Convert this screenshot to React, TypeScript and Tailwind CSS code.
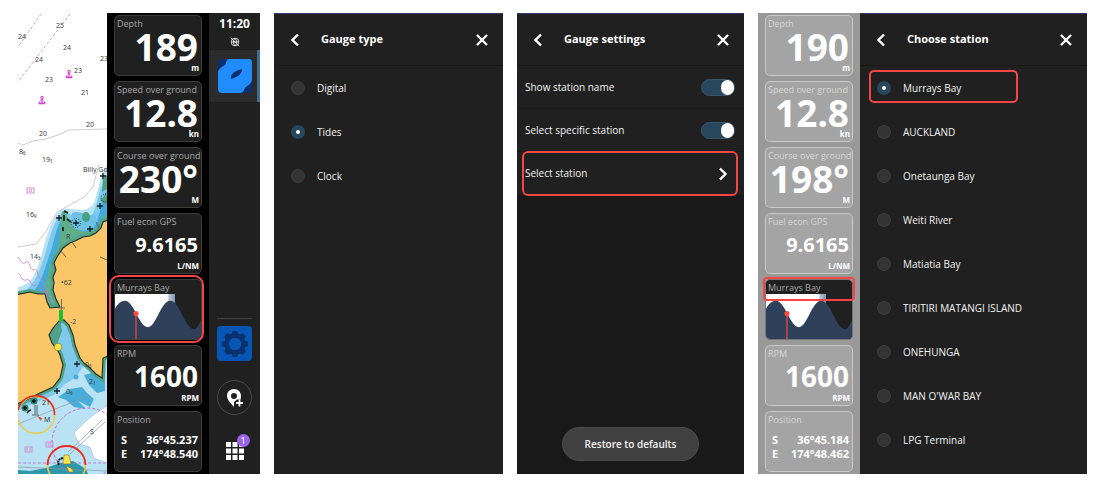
import { useState } from 'react';
import type { ReactNode } from 'react';
import clsx from 'clsx';

type Reading = {
  label: string;
  value: string;
  unit?: string;
  size?: 'lg' | 'md' | 'sm';
};

const stations = [
  'Murrays Bay',
  'AUCKLAND',
  'Onetaunga Bay',
  'Weiti River',
  'Matiatia Bay',
  'TIRITIRI MATANGI ISLAND',
  'ONEHUNGA',
  "MAN O'WAR BAY",
  'LPG Terminal',
];

function ChevronIcon({ right = false }: { right?: boolean }) {
  return (
    <svg width="14" height="16" viewBox="0 0 14 16" fill="none" stroke="currentColor" strokeWidth="2.4" aria-hidden="true">
      {right ? <path d="M4 2.5 9.5 8 4 13.5" /> : <path d="M10 2.5 4.5 8l5.500 5.500" />}
    </svg>
  );
}

function CloseIcon() {
  return (
    <svg width="14" height="14" viewBox="0 0 14 14" fill="none" stroke="currentColor" strokeWidth="2.3" aria-hidden="true">
      <path d="M2 2l10 10M12 2 2 12" />
    </svg>
  );
}

function Tile({ dimmed, label, children }: { dimmed?: boolean; label: string; children: ReactNode }) {
  return (
    <section
      className={clsx(
        'relative flex h-[61px] flex-col rounded-[5px] border text-white',
        dimmed ? 'border-[#c9c9c9] bg-[#a4a4a4]' : 'border-[#3c3c3c] bg-[#202020]',
      )}
    >
      <h3 className={clsx("whitespace-nowrap pl-0.5 pt-0.5 font-['Open_Sans'] text-[9px] leading-[12px]", dimmed ? 'text-[#d6d6d6]' : 'text-[#a8a8a8]')}>{label}</h3>
      {children}
    </section>
  );
}

function ValueTile({ reading, dimmed }: { reading: Reading; dimmed?: boolean }) {
  const { label, value, unit, size = 'lg' } = reading;
  return (
    <Tile label={label} dimmed={dimmed}>
      <p
        className={clsx(
          'pr-[3px] text-right font-bold leading-[33px]',
          size === 'lg' && 'text-[37px]',
          size === 'md' && 'text-[28px]',
          size === 'sm' && 'text-[20px]',
        )}
      >
        {value}
      </p>
      <p className="pr-0.5 text-right text-[8px] font-bold leading-[10px]">{unit}</p>
    </Tile>
  );
}

function TideGraph() {
  return (
    <svg className="mt-auto block h-[45px] w-full rounded-b-[4px]" viewBox="0 0 86 46" preserveAspectRatio="none" aria-label="Tide graph">
      <defs>
        <linearGradient id="dusk" x1="0" x2="1">
          <stop offset="0" stopColor="#fff" />
          <stop offset="0.87" stopColor="#fff" />
          <stop offset="0.9" stopColor="#b9c5d8" />
          <stop offset="1" stopColor="#7d93b4" />
        </linearGradient>
      </defs>
      <rect width="60" height="46" fill="url(#dusk)" />
      <path d="M0 15C3 10 6 7 10 7C19 7 24 34 33 34C41 34 46 7 55 7C65 7 70 36 79 36C82 36 84 31 86 27V46H0Z" fill="#2f415a" />
      <path d="M21 20V46" stroke="#c9443f" strokeWidth="1.6" />
      <circle cx="21" cy="20" r="2.6" fill="#ff4b3a" />
    </svg>
  );
}

function GaugeColumn({ dimmed, readings, position }: { dimmed?: boolean; readings: Reading[]; position: [string, string] }) {
  return (
    <div className={clsx('flex w-[102px] shrink-0 flex-col gap-[5px] px-[7px] py-0.5', dimmed ? 'bg-[#999999]' : 'bg-black')}>
      {readings.slice(0, 4).map((r) => (
        <ValueTile key={r.label} reading={r} dimmed={dimmed} />
      ))}
      <section
        className={clsx(
          'relative flex h-[61px] flex-col rounded-[5px] border bg-[#202020]',
          dimmed ? 'border-[#777777]' : 'border-[#3c3c3c]',
        )}
      >
        <h3 className="whitespace-nowrap pl-0.5 pt-0.5 font-['Open_Sans'] text-[9px] leading-[12px] text-[#a8a8a8]">Murrays Bay</h3>
        <TideGraph />
        <div
          className={clsx(
            'pointer-events-none absolute border-2 border-[#f64545]',
            dimmed ? '-inset-x-[3px] -top-[3px] h-6 rounded-[4px]' : '-bottom-[4px] -left-[6px] -right-[3px] -top-[5px] rounded-[10px]',
          )}
        />
      </section>
      <ValueTile reading={readings[4]} dimmed={dimmed} />
      <Tile label="Position" dimmed={dimmed}>
        <dl className="mb-2.5 mt-auto grid grid-cols-[auto_1fr] pl-1.5 pr-[3px] text-[11px] font-bold leading-[14px]">
          <dt>S</dt>
          <dd className="text-right">{position[0]}</dd>
          <dt>E</dt>
          <dd className="text-right">{position[1]}</dd>
        </dl>
      </Tile>
    </div>
  );
}

function Anchor({ x, y }: { x: number; y: number }) {
  return (
    <g transform={`translate(${x} ${y})`} stroke="#d63fd0" strokeWidth="1.1" fill="none">
      <circle cx="0" cy="-2.600" r="1.1" />
      <path d="M0-1.500V3M-1.800 0h3.600M-3 1.500C-3 4 3 4 3 1.500M-3.500 3.800h7" />
    </g>
  );
}

function ChartMap() {
  const land =
    'M92 206L85 209L83 215L78 220L72 223L65 224L59 227L52 230L45 235L39 244L36 250L38 257L35 264L36 270L35 277L38 286L42 294L32 295L29 289L27 281L20 281L12 279L-3 282V392L12 385L22 380L35 374L42 365L45 352L42 342L40 338L34 330L31 322L35 315L42 307L46 307L51 312L55 322L57 332L62 345L66 350L72 355L78 361L84 365L85 345L92 342Z';
  const crosses: [number, number][] = [
    [41, 205], [58, 210], [72, 216], [82, 193], [85, 163], [59, 351], [39, 378],
  ];
  const soundings: [number, number, string][] = [
    [38, 15, '25'], [0, 26, '24'], [45, 37, '24'], [17, 49, '24'], [82, 48, '23'], [56, 60, '23'], [27, 69, '23'],
    [63, 82, '21'], [68, 114, '20'], [21, 123, '20'], [1, 141, '8₆'], [24, 149, '19₁'], [8, 204, '16₉'], [12, 246, '14₃'],
    [43, 272, '•62'], [52, 311, '-2'], [67, 354, '0₈'], [71, 371, '2₁'], [48, 381, '0₆'], [24, 392, '21'],
    [26, 409, 'M'], [72, 421, 'S'], [48, 226, 'R'],
  ];
  return (
    <svg className="block h-full w-full bg-white" viewBox="0 0 89 461" preserveAspectRatio="xMidYMid slice" aria-label="Nautical chart">
      {/* depth areas, shallowest last */}
      <path d="M0 274C14 272 19 259 24 240C29 222 34 203 44 196C56 193 66 203 76 190C81 175 82 162 89 152V461H0Z" fill="#b9e2f5" />
      <path d="M4 280C18 272 23 254 28 238C33 218 38 204 46 198C55 201 62 212 72 205C81 194 80 172 89 164V300H4Z" fill="#7fcaec" />
      <path d="M14 281C25 268 28 250 34 235C38 217 42 204 48 202C52 214 64 220 76 212C84 203 82 184 89 178V225L50 245L42 300L28 290Z" fill="#42aadb" />
      <path d="M44 305L52 312L66 352L58 364L46 372L36 382L16 390L0 398V380L30 340Z" fill="#7fcaec" />
      <path d="M44 198C50 200 49 207 55 213C62 220 72 222 82 211L85 204L89 200V226L60 234L42 250L40 290L44 306L30 297L26 283L28 268L33 250L41 230Z" fill="#5fae8a" />
      <path d="M54 200C62 196 72 206 76 200L80 208C74 220 60 220 53 212Z" fill="#6dc2e6" />
      <ellipse cx="68" cy="204" rx="4" ry="5" fill="#4aa283" />
      <path d="M85 165l4-3v14l-5 3zM82 187l7-6v11z" fill="#4aa283" />
      <path d="M52 376L64 374L69 380L76 386L72 394L60 388L68 396L56 394L48 387L40 384Z" fill="#49add9" />
      <circle cx="58" cy="364" r="2.500" fill="#49add9" />
      <path d="M66 362l8-2 7 6 6 4v8l-8 2-8-8z" fill="#49add9" />
      <path d="M89 393L78 400L68 408L56 420L61 431L72 434L76 445L89 450Z" fill="#fff" stroke="#9cb6c2" strokeWidth="0.5" />
      <path d="M0 461V457L12 458L28 455L42 450L55 448L68 456L70 461Z" fill="#2e98ab" />
      <path d={land} fill="none" stroke="#4fa389" strokeWidth="6" />
      <path d="M42 305L30 314L29 330L38 334L41 326L44 318Z" fill="#4fa389" />
      <path d={land} fill="#fac667" stroke="#252a1c" strokeWidth="1.100" />
      <path d="M82 217L78 209M54 229l4 6M43 238l5 6M82 244l7 3" stroke="#5e513b" strokeWidth="0.9" />

      {/* contours and boundaries */}
      <g fill="none" stroke="#c2c2c2" strokeWidth="0.8">
        <path d="M0 130L5 132L14 128L28 126L40 122L51 117L70 116.500L89 116" />
        <path d="M0 234L18 231L27 220L39 199L52 192L66 184L75 174L81 151" />
      </g>
      <path d="M23 1L0 34M52 1L0 69" stroke="#d99bd8" strokeDasharray="3 2" />
      <path d="M0 244C3 247 4 253 8 249C12 246 11 258 16 257C21 254 18 265 24 267C25 274 31 274 29 280L36 289M0 260C4 262 2 268 8 267C13 264 12 275 18 272C22 274 22 281 27 278L31 290" fill="none" stroke="#c47fd5" strokeWidth="0.8" />
      <path d="M0 411L70 383" stroke="#8799a0" strokeWidth="0.7" />
      <circle cx="69" cy="430" r="35" fill="none" stroke="#c568cd" strokeDasharray="3 2" />
      <path d="M0 450H89" stroke="#c568cd" strokeDasharray="3 2" strokeWidth="0.8" />
      <path d="M50 439L84 407M52 441L87 409M0 454L89 458" stroke="#8799a0" strokeWidth="0.7" />

      {/* wrecks and hazards */}
      <circle cx="58" cy="210" r="4.500" fill="none" stroke="#203530" strokeDasharray="1 1.300" />
      <circle cx="87" cy="185" r="4" fill="none" stroke="#203530" strokeDasharray="1 1.300" />
      {crosses.map(([x, y]) => (
        <path key={`${x}-${y}`} d={`M${x - 3} ${y}h6M${x} ${y - 3}v6`} stroke="#14191a" strokeWidth="1.3" />
      ))}
      <path d="M46 198l4 2M46 202v6M49 206l4 3M45 214v4" stroke="#24301e" strokeWidth="2" />
      <Anchor x={51} y={61} />
      <Anchor x={24} y={87} />
      <g fill="none" stroke="#d287d0" strokeWidth="0.9">
        <rect x="9" y="175" width="7" height="5" />
        <circle cx="12.500" cy="177.500" r="1.300" />
        <rect x="7" y="434" width="7" height="5" />
        <path d="M9 435v3M12 435v3" />
        <rect x="28" y="429" width="7" height="5" />
        <circle cx="31.500" cy="431.500" r="1.500" />
      </g>

      {/* buoys and lights */}
      <path d="M43.500 286v20M40 295h7" stroke="#6c6c66" />
      <rect x="41" y="297" width="4" height="11" fill="#20bd36" />
      <circle cx="40" cy="334" r="3.800" fill="#f6e84b" stroke="#6b6a36" strokeWidth="0.6" />
      <circle cx="7" cy="395" r="3.500" fill="#347f6d" />
      <circle cx="16" cy="388" r="3.500" fill="#347f6d" />
      <path d="M5 395h4M7 393v4M14 388h4M16 386v4M9 400q2-3 4-3" stroke="#101919" strokeWidth="1.500" fill="none" />
      <path d="M17 392v9M19 392v9M14 402h7" stroke="#4a5250" strokeWidth="0.9" fill="none" />
      <path d="M19 403l5 2-1 3z" fill="#e04435" />
      <circle cx="18" cy="402" r="18.500" fill="none" stroke="#efcb42" strokeWidth="1.500" />
      <path d="M0 397A18.500 18.500 0 0 1 36.500 402" fill="none" stroke="#e62b28" strokeWidth="1.600" />
      <circle cx="48.500" cy="452" r="19" fill="none" stroke="#efcb42" strokeWidth="1.500" />
      <path d="M29.500 452A19 19 0 0 1 67.500 452" fill="none" stroke="#e62b28" strokeWidth="1.800" />
      <path d="M46 442h5l2 9h-8zM48 453l3 6h5l-3-4z" fill="#f3e24a" stroke="#706b2b" strokeWidth="0.5" />
      <path d="M41 452Q38 447 45 445" stroke="#111b1d" strokeWidth="2" strokeDasharray="2 0.600" fill="none" />

      <g fill="#414141" className="font-['Noto_Sans'] text-[7px]">
        {soundings.map(([x, y, label]) => (
          <text key={`${x}-${y}`} x={x} y={y}>{label}</text>
        ))}
        <text x="65" y="159">Billy Go</text>
      </g>
    </svg>
  );
}

function Sidebar() {
  return (
    <nav className="flex w-[51px] shrink-0 flex-col items-center bg-[#202020] text-white" aria-label="Main">
      <time className="pt-0.5 text-[12px] font-bold leading-[18px]">11:20</time>
      <svg className="mt-1" width="10" height="10" viewBox="0 0 12 12" fill="none" stroke="#d8d8d8" strokeWidth="1.200" aria-hidden="true">
        <circle cx="6" cy="6" r="4.600" />
        <path d="M1.500 6h9M6 1.500C3.500 4 3.500 8 6 10.500C8.500 8 8.500 4 6 1.500M1 1l10 10" />
      </svg>
      <div className="mt-[3px] flex w-full justify-center border-r-[3px] border-[#3f6f8d] bg-[#2b2b2b] py-[9px] pl-[3px]">
        <button type="button" aria-label="Chart">
          <svg className="block" width="34" height="34" viewBox="0 0 34 34">
            <rect width="34" height="34" rx="4" fill="#0a2f6b" />
            <path d="M11 0H31Q34 0 34 3V21Q33 25 29 27Q27 28 26 31Q25 34 22 34H4Q0 34 0 30V12Q2 9 5 7Q8 6 8 3Q9 0 11 0Z" fill="#208cff" />
            <path d="M24 10Q24 14 20 17L16 19L13 20V17Q15 12 24 10Z" fill="#0a2f6b" />
          </svg>
        </button>
      </div>
      <div className="mt-auto w-[35px] border-t border-[#454545]" />
      <button type="button" aria-label="Settings" className="mt-[7px] flex size-[35px] items-center justify-center rounded-[4px] bg-[#0756b5]">
        <svg width="28" height="28" viewBox="0 0 28 28" fill="none" stroke="#09326d" aria-hidden="true">
          <circle cx="14" cy="14" r="8.500" strokeWidth="4.500" />
          {[0, 45, 90, 135, 180, 225, 270, 315].map((angle) => (
            <path key={angle} d="M11.500 4L12.200 1.500H15.800L16.500 4Z" fill="#09326d" strokeWidth="1.200" strokeLinejoin="round" transform={`rotate(${angle} 14 14)`} />
          ))}
        </svg>
      </button>
      <button type="button" aria-label="Add waypoint" className="mt-[19px] flex size-[35px] items-center justify-center rounded-full border border-[#484848]">
        <svg width="20" height="20" viewBox="0 0 20 20" aria-hidden="true">
          <path fillRule="evenodd" d="M9 1C4.800 1 2 4 2 8C2 12 6 15 9 19V14L12 11.500H15.500Q16 10 16 8C16 4 13.200 1 9 1ZM9 5A3 3 0 1 1 9 11A3 3 0 1 1 9 5Z" fill="#fff" />
          <path d="M14.500 11.500v7M11 15h7" stroke="#fff" strokeWidth="1.800" />
        </svg>
      </button>
      <button type="button" aria-label="Apps, 1 notification" className="relative mb-3.5 mt-[27px]">
        <svg className="block" width="18" height="18" viewBox="0 0 18 18" fill="#fff">
          {[0, 6.5, 13].map((y) => [0, 6.5, 13].map((x) => <rect key={`${x}-${y}`} x={x} y={y} width="5" height="5" />))}
        </svg>
        <span className="absolute -right-[6px] -top-[8px] flex size-[13px] items-center justify-center rounded-full bg-[#9b62ea] text-[9px] leading-none">1</span>
      </button>
    </nav>
  );
}

function PanelHeader({ title }: { title: string }) {
  return (
    <header className="flex h-[53px] shrink-0 items-center border-b border-t border-b-[#181818] border-t-[#303c78] px-[9px] text-white">
      <button type="button" aria-label="Back" className="flex size-6 items-center justify-center">
        <ChevronIcon />
      </button>
      <h2 className="ml-3.5 flex-1 whitespace-nowrap font-['Open_Sans'] text-[11px] font-bold">{title}</h2>
      <button type="button" aria-label="Close" className="flex size-6 items-center justify-center">
        <CloseIcon />
      </button>
    </header>
  );
}

function RadioList({ name, options, initial, boxed }: { name: string; options: string[]; initial: string; boxed?: boolean }) {
  const [selected, setSelected] = useState(initial);
  return (
    <fieldset className="flex flex-col">
      {options.map((option) => (
        <label key={option} className="relative flex h-11 items-center gap-3 pl-[17px] font-['Open_Sans'] text-[10px] text-[#f2f2f2]">
          <input
            type="radio"
            name={name}
            checked={selected === option}
            onChange={() => setSelected(option)}
            className="size-3.5 appearance-none rounded-full border border-[#3b3b3b] bg-[#343434] checked:border-[5px] checked:border-[#29475c] checked:bg-white"
          />
          {option}
          {boxed && option === initial && (
            <span className="pointer-events-none absolute left-[9px] top-[4px] h-[33px] w-[149px] rounded-[5px] border-2 border-[#f64545]" />
          )}
        </label>
      ))}
    </fieldset>
  );
}

function ToggleRow({ label }: { label: string }) {
  const [on, setOn] = useState(true);
  return (
    <label className="flex h-[43px] items-center justify-between border-b border-[#191919] bg-[#202020] pl-2 pr-[9px]">
      {label}
      <input
        type="checkbox"
        role="switch"
        checked={on}
        onChange={() => setOn(!on)}
        className="h-[17px] w-[34px] appearance-none rounded-full border border-[#3a566a] bg-[#3a3a3a] before:block before:h-[15px] before:w-[13px] before:rounded-full before:bg-white checked:bg-[#29475c] checked:before:ml-auto"
      />
    </label>
  );
}

export default function App() {
  return (
    <main className="grid grid-cols-[242fr_229fr_227fr_329fr] gap-3.5 bg-white px-[18px] pb-4 pt-[13px] font-['Noto_Sans',sans-serif]">
      <div className="flex">
        <div className="relative min-w-0 flex-1">
          <div className="absolute inset-0 overflow-hidden">
            <ChartMap />
          </div>
        </div>
        <GaugeColumn
          readings={[
            { label: 'Depth', value: '189', unit: 'm' },
            { label: 'Speed over ground', value: '12.8', unit: 'kn' },
            { label: 'Course over ground', value: '230°', unit: 'M' },
            { label: 'Fuel econ GPS', value: '9.6165', unit: 'L/NM', size: 'sm' },
            { label: 'RPM', value: '1600', unit: 'RPM', size: 'md' },
          ]}
          position={['36°45.237', '174°48.540']}
        />
        <Sidebar />
      </div>

      <div className="bg-[#202020]">
        <PanelHeader title="Gauge type" />
        <RadioList name="gauge-type" options={['Digital', 'Tides', 'Clock']} initial="Tides" />
      </div>

      <div className="flex flex-col bg-[#191919] font-['Open_Sans'] text-[10px] text-[#f2f2f2]">
        <div className="bg-[#202020]">
          <PanelHeader title="Gauge settings" />
        </div>
        <ToggleRow label="Show station name" />
        <ToggleRow label="Select specific station" />
        <button type="button" className="relative flex h-[43px] items-center justify-between bg-[#202020] pl-2 pr-3.5">
          Select station
          <span className="text-white">
            <ChevronIcon right />
          </span>
          <span className="pointer-events-none absolute -bottom-px -top-px left-[5px] right-[6px] rounded-[6px] border-2 border-[#f64545]" />
        </button>
        <button type="button" className="mx-auto mb-[13px] mt-auto h-[34px] w-[137px] rounded-full border border-[#4b4b4b] bg-[#404040] font-semibold">
          Restore to defaults
        </button>
      </div>

      <div className="flex">
        <GaugeColumn
          dimmed
          readings={[
            { label: 'Depth', value: '190', unit: 'm' },
            { label: 'Speed over ground', value: '12.8', unit: 'kn' },
            { label: 'Course over ground', value: '198°', unit: 'M' },
            { label: 'Fuel econ GPS', value: '9.6165', unit: 'L/NM', size: 'sm' },
            { label: 'RPM', value: '1600', unit: 'RPM', size: 'md' },
          ]}
          position={['36°45.184', '174°48.462']}
        />
        <div className="min-w-0 flex-1 bg-[#202020]">
          <PanelHeader title="Choose station" />
          <RadioList name="station" options={stations} initial="Murrays Bay" boxed />
        </div>
      </div>
    </main>
  );
}
